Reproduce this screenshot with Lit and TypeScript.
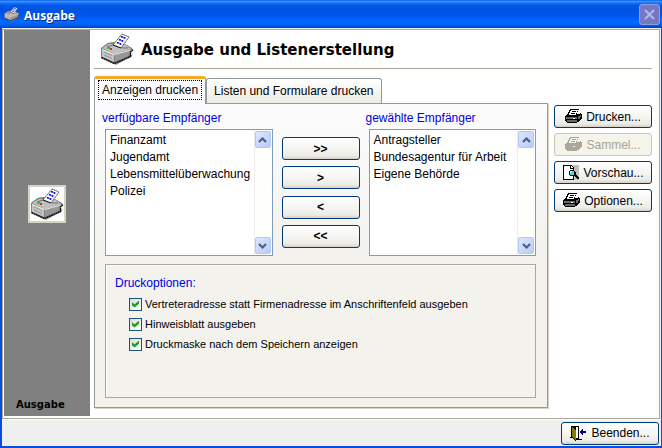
import { LitElement, html, css, TemplateResult } from "lit";
import { customElement, property, state } from "lit/decorators.js";

const devicePrinter = (size: string) => html`
  <svg class=${size} viewBox="0 0 34 32" aria-hidden="true">
    <path d="M4 27 L15 31 L33 21 L31 24 L16 32 Z" fill="#a0a0a0" />
    <path d="M1 15 L8 10 L16 9 L25 11 L32 15 L33 17 L31 18 L31 23 L15 31 L1 25 Z" fill="#808080" />
    <path d="M2 15 L9 11 L24 11 L31 16 L15 21 Z" fill="#c0c0c0" />
    <path d="M2 16 L14 21 L14 29 L2 24 Z" fill="#c4c4c4" />
    <path d="M15 21 L30 17 L30 22 L15 29 Z" fill="#989898" />
    <path d="M1.500 24.500 L14.500 30.500 L30.500 23.500 V18.500 L33 17" fill="none" stroke="#101010" stroke-width="1.500" stroke-dasharray="2 .4" />
    <path d="M1.500 24 V15 L8 10.500 L14 9.500" fill="none" stroke="#808080" />
    <path d="M2 16.500 L14.500 21.500 L31 17" fill="none" stroke="#fff" stroke-width=".8" />
    <path d="M4 19 L12 22.500 M4 22 L12 25.500" stroke="#8c8c8c" stroke-width=".8" />
    <path d="M7 14 L13 12 M22 15 L28 15" stroke="#707070" />
    <path d="M13 12 L22 1 L29 4 L21 15 Z" fill="#fff" stroke="#303030" stroke-width=".9" stroke-dasharray="1.500 .5" />
    <path d="M13 12 L21 15" stroke="#202020" />
    <path d="M21 3.500 L26 5.500 M19 6.500 L24 8.500 M17 9.500 L22 11.500" stroke="#0000e0" stroke-width="1.700" stroke-dasharray="2 .6" />
    <rect x="7" y="14" width="3" height="2" fill="#00e020" />
    <rect x="10" y="15" width="2" height="2" fill="#f02020" />
  </svg>`;

const icons: Record<string, TemplateResult> = {
  printer: html`
    <svg class="icon" viewBox="0 0 17 15" shape-rendering="crispEdges" aria-hidden="true">
      <path class="ink" d="M5 0H14V1H13V3H12V5H15V4H16V5H17V10H16V11H15V12H14V13H12V14H2V13H1V12H0V7H1V6H2V5H3V3H4V1H5Z" />
      <path class="paper" d="M6 1H13V2H12V4H11V6H4V5H4V4H5V2H6Z" />
      <path class="ink" d="M7 2H11V3H7Z M6 4H10V5H6Z" />
      <path class="face" d="M1 8H12V10H1Z M2 11H12V13H2Z M13 7H15V10H13Z M15 6H16V8H15Z" />
      <path class="paper" d="M8 9H10V10H8Z" />
    </svg>`,
  preview: html`
    <svg class="icon" viewBox="0 0 17 15" shape-rendering="crispEdges" aria-hidden="true">
      <rect x="11" y="0" width="6" height="15" fill="#c0c0c0" />
      <path d="M1 0H9L12 3V15H1Z" fill="#000" />
      <path d="M2 1H8V4H11V14H2Z" fill="#fff" />
      <path d="M9 1L11 3H9Z" fill="#fff" />
      <path d="M8 5H12V6H13V7H14V10H15V11H16V12H17V14H15V13H14V12H13V11H8V10H7V6H8Z" fill="#000" />
      <rect x="8" y="6" width="4" height="4" fill="#40e0e8" />
      <path d="M8 6H10V7H9V8H8Z" fill="#fff" />
    </svg>`,
  door: html`
    <svg class="icon" viewBox="0 0 17 15" shape-rendering="crispEdges" aria-hidden="true">
      <path d="M1 0H9V13H12V14H6V15H5V14H4V13H3V12H0V11H1Z" fill="#000" />
      <path d="M6 1H8V12H6Z" fill="#fff" />
      <path d="M2 1H3V2H4V3H5V4H6V14H5V13H4V12H3V11H2Z" fill="#808000" />
      <path d="M10 5H11V4H12V3H13V5H16V7H13V9H12V8H11V7H10Z" fill="#000090" />
    </svg>`,
};

const chevron = (down: boolean) => html`
  <svg class="chevron" viewBox="0 0 9 6" aria-hidden="true">
    <path d=${down ? "M1 1 L4.500 4.500 L8 1" : "M1 5 L4.500 1.500 L8 5"} fill="none" stroke="#4d6185" stroke-width="2.200" />
  </svg>`;

const buttonStyles = css`
  button {
    font: inherit;
    color: #000;
    margin: 0;
    padding: 0;
  }
  .push {
    height: 23px;
    display: flex;
    align-items: center;
    justify-content: center;
    gap: 4px;
    border: 1px solid #003c74;
    border-radius: 3px;
    background: linear-gradient(#fff, #f4f4f0 55%, #ecebe6 85%, #d6d0c5);
    white-space: nowrap;
  }
  .push:disabled {
    color: #a7a591;
    border-color: #c9c7ba;
    background: #f5f4ea;
  }
  .icon {
    width: 17px;
    height: 15px;
    flex: none;
  }
  .ink { fill: #000; }
  .paper { fill: #fff; }
  .face { fill: #686868; }
  :disabled .ink { fill: #aca899; }
  :disabled .paper { fill: #f5f4ea; }
  :disabled .face { fill: #aca899; }
`;

@customElement("recipient-list")
class RecipientList extends LitElement {
  @property() label = "";
  @property({ attribute: false }) items: string[] = [];

  static styles = [
    buttonStyles,
    css`
      :host {
        display: flex;
        flex-direction: column;
        min-width: 0;
      }
      .caption {
        color: #0000e0;
        line-height: 16px;
        margin: 0 0 3px -3px;
        white-space: nowrap;
      }
      .box {
        height: 125px;
        display: flex;
        border: 1px solid #7f9db9;
        background: #fff;
      }
      select {
        flex: 1;
        min-width: 0;
        height: 100%;
        padding: 3px 0 0;
        border: 0;
        border-radius: 0;
        outline: 0;
        overflow: hidden;
        background: #fff;
        font: inherit;
        color: #000;
      }
      option {
        height: 17px;
        min-height: 17px;
        padding: 0 4px;
        line-height: 17px;
        box-sizing: border-box;
        overflow: hidden;
      }
      .bar {
        width: 17px;
        padding: 1px 0;
        display: flex;
        flex-direction: column;
        justify-content: space-between;
        background: #fefefb;
        border-left: 1px solid #eeede5;
      }
      .arrow {
        width: 16px;
        height: 17px;
        display: flex;
        align-items: center;
        justify-content: center;
        border: 1px solid #b4c8f6;
        border-radius: 2px;
        background: linear-gradient(135deg, #dce6ff, #b9cbf8);
      }
      .chevron {
        width: 9px;
        height: 6px;
      }
    `,
  ];

  render() {
    return html`
      <label class="caption" for="list">${this.label}</label>
      <div class="box">
        <select id="list" multiple size="7">
          ${this.items.map((item) => html`<option>${item}</option>`)}
        </select>
        <div class="bar">
          <button class="arrow" type="button" aria-label="Nach oben">${chevron(false)}</button>
          <button class="arrow" type="button" aria-label="Nach unten">${chevron(true)}</button>
        </div>
      </div>
    `;
  }
}

@customElement("app-root")
class AppRoot extends LitElement {
  @state() private tab = 0;

  private tabs = ["Anzeigen drucken", "Listen und Formulare drucken"];
  private available = ["Finanzamt", "Jugendamt", "Lebensmittelüberwachung", "Polizei"];
  private chosen = ["Antragsteller", "Bundesagentur für Arbeit", "Eigene Behörde"];
  private moves = [">>", ">", "<", "<<"];
  private options = [
    "Vertreteradresse statt Firmenadresse im Anschriftenfeld ausgeben",
    "Hinweisblatt ausgeben",
    "Druckmaske nach dem Speichern anzeigen",
  ];
  private actions = [
    { text: "Drucken...", icon: "printer", disabled: false },
    { text: "Sammel...", icon: "printer", disabled: true },
    { text: "Vorschau...", icon: "preview", disabled: false },
    { text: "Optionen...", icon: "printer", disabled: false },
  ];

  static styles = [
    buttonStyles,
    css`
      :host {
        display: flex;
        flex-direction: column;
        box-sizing: border-box;
        min-height: 100vh;
        border: solid #0a4be0;
        border-width: 0 1px 2px 2px;
        background: #efefef;
        font: 12px/16px "Liberation Sans", Arial, sans-serif;
        color: #000;
      }
      .titlebar {
        height: 28px;
        margin: 0 -1px 0 -2px;
        padding: 0 4px;
        display: flex;
        align-items: center;
        gap: 4px;
        box-sizing: border-box;
        background: linear-gradient(#0a5ae8, #3a93ff 5%, #1a78fa 10%, #0058e8 18%, #0053e0 35%, #0058f0 60%, #0468ff 78%, #0062f4 88%, #0040c8);
      }
      .title {
        flex: 1;
        margin: 3px 0 0;
        font: bold 12px/16px "Open Sans", sans-serif;
        color: #fff;
        text-shadow: 1px 1px 0 #0a2a88;
      }
      .close {
        width: 21px;
        height: 21px;
        margin-right: -2px;
        border: 1px solid #8f9fe6;
        border-radius: 3px;
        background: #7478c4;
        display: flex;
        align-items: center;
        justify-content: center;
      }
      .cross { width: 11px; height: 11px; }
      .mini { width: 16px; height: 16px; }
      .large { width: 34px; height: 32px; }
      .main {
        flex: 1;
        display: flex;
        gap: 4px;
        margin: 1px 1px 0 0;
        padding: 0 7px 2px 1px;
        border: 1px solid #aca899;
        background: #fff;
      }
      .side {
        width: 86px;
        flex: none;
        display: flex;
        flex-direction: column;
        background: #808080;
      }
      .picture {
        margin: 0 auto;
        padding: 1px 0;
        border: 2px solid #d6d2c6;
        background: #fff;
        display: flex;
      }
      .top { flex: 4; }
      .bottom {
        flex: 5;
        display: flex;
        align-items: flex-end;
      }
      .sidename {
        margin: 0 0 3px 12px;
        font: bold 10px/16px "DejaVu Sans", sans-serif;
      }
      .content {
        flex: 1;
        min-width: 0;
        display: flex;
        flex-direction: column;
      }
      .head {
        height: 38px;
        display: flex;
        align-items: center;
        gap: 7px;
        padding-left: 6px;
        border-bottom: 1px solid #aca899;
      }
      h1 {
        margin: 2px 0 0;
        font: bold 15px/24px "DejaVu Sans", sans-serif;
      }
      .columns {
        flex: 1;
        display: flex;
        gap: 6px;
        padding: 7px 0 8px;
      }
      .pages {
        flex: 1;
        min-width: 0;
        display: flex;
        flex-direction: column;
      }
      .tabs {
        display: flex;
        align-items: flex-end;
        height: 27px;
      }
      .tab {
        height: 25px;
        padding: 0 7px;
        border: 1px solid #919b9c;
        border-bottom: 0;
        border-radius: 3px 3px 0 0;
        background: linear-gradient(#fff, #ecebe4);
      }
      .tab.active {
        height: 28px;
        margin-bottom: -1px;
        padding: 0 3px;
        border-top: 3px solid #f8a828;
        background: #fcfcfe;
        position: relative;
      }
      .focus {
        display: block;
        padding: 1px 3px;
        margin-bottom: 3px;
        border: 1px dotted #000;
      }
      .panel {
        flex: 1;
        padding: 6px 11px 9px 10px;
        display: flex;
        flex-direction: column;
        gap: 8px;
        border: 1px solid #919b9c;
        box-shadow: 1px 1px 0 #d8d3c2;
        background: linear-gradient(#fcfcfe, #f3f2ee 50%, #f3f2ec);
      }
      .transfer {
        display: grid;
        grid-template-columns: minmax(0, 1fr) 78px minmax(0, 1fr);
        column-gap: 9px;
      }
      .moves {
        display: flex;
        flex-direction: column;
        justify-content: space-between;
        padding: 27px 0 8px;
      }
      .move { font-weight: bold; }
      fieldset {
        flex: 1;
        min-width: 0;
        margin: 0;
        padding: 10px 9px;
        border: 1px solid #aca899;
        box-shadow: inset 1px 1px 0 #fff;
      }
      legend {
        float: left;
        width: 100%;
        padding: 0;
        color: #0000e0;
      }
      .checks {
        clear: both;
        display: flex;
        flex-direction: column;
        gap: 4px;
        padding: 5px 0 0 14px;
      }
      .check {
        display: flex;
        align-items: center;
        gap: 3px;
        font-size: 11px;
        white-space: nowrap;
      }
      .check input {
        appearance: none;
        width: 13px;
        height: 13px;
        margin: 0;
        border: 1px solid #1c5180;
        background: linear-gradient(135deg, #dcdcd7, #fff);
        display: grid;
        place-items: center;
      }
      .check input:checked::before {
        content: "";
        width: 7px;
        height: 7px;
        background: #21a121;
        clip-path: polygon(0 25%, 38% 55%, 100% 0, 100% 45%, 38% 100%, 0 72%);
      }
      .actions {
        width: 98px;
        flex: none;
        padding-top: 29px;
        display: flex;
        flex-direction: column;
        gap: 5px;
      }
      .footer {
        height: 27px;
        display: flex;
        align-items: center;
        justify-content: flex-end;
        padding: 0 2px 0 0;
        border-top: 1px solid #fff;
        box-sizing: border-box;
      }
      .quit { width: 98px; }
    `,
  ];

  render() {
    return html`
      <header class="titlebar">
        ${devicePrinter("mini")}
        <div class="title">Ausgabe</div>
        <button class="close" type="button" aria-label="Schließen">
          <svg class="cross" viewBox="0 0 11 11" aria-hidden="true">
            <path d="M1 1 L10 10 M10 1 L1 10" stroke="#b4b8e8" stroke-width="2" />
          </svg>
        </button>
      </header>
      <main class="main">
        <aside class="side">
          <div class="top"></div>
          <div class="picture">${devicePrinter("large")}</div>
          <div class="bottom"><div class="sidename">Ausgabe</div></div>
        </aside>
        <section class="content">
          <div class="head">
            ${devicePrinter("large")}
            <h1>Ausgabe und Listenerstellung</h1>
          </div>
          <div class="columns">
            <div class="pages">
              <div class="tabs" role="tablist">
                ${this.tabs.map(
                  (name, i) => html`
                    <button
                      class="tab ${i === this.tab ? "active" : ""}"
                      type="button"
                      role="tab"
                      aria-selected=${i === this.tab}
                      @click=${() => (this.tab = i)}
                    >
                      ${i === this.tab ? html`<span class="focus">${name}</span>` : name}
                    </button>
                  `,
                )}
              </div>
              <div class="panel" role="tabpanel">
                <div class="transfer">
                  <recipient-list label="verfügbare Empfänger" .items=${this.available}></recipient-list>
                  <div class="moves">
                    ${this.moves.map((m) => html`<button class="push move" type="button">${m}</button>`)}
                  </div>
                  <recipient-list label="gewählte Empfänger" .items=${this.chosen}></recipient-list>
                </div>
                <fieldset>
                  <legend>Druckoptionen:</legend>
                  <div class="checks">
                    ${this.options.map(
                      (o) => html`<label class="check"><input type="checkbox" checked />${o}</label>`,
                    )}
                  </div>
                </fieldset>
              </div>
            </div>
            <div class="actions">
              ${this.actions.map(
                (a) => html`
                  <button class="push" type="button" ?disabled=${a.disabled}>${icons[a.icon]}${a.text}</button>
                `,
              )}
            </div>
          </div>
        </section>
      </main>
      <footer class="footer">
        <button class="push quit" type="button">${icons.door}Beenden...</button>
      </footer>
    `;
  }
}
